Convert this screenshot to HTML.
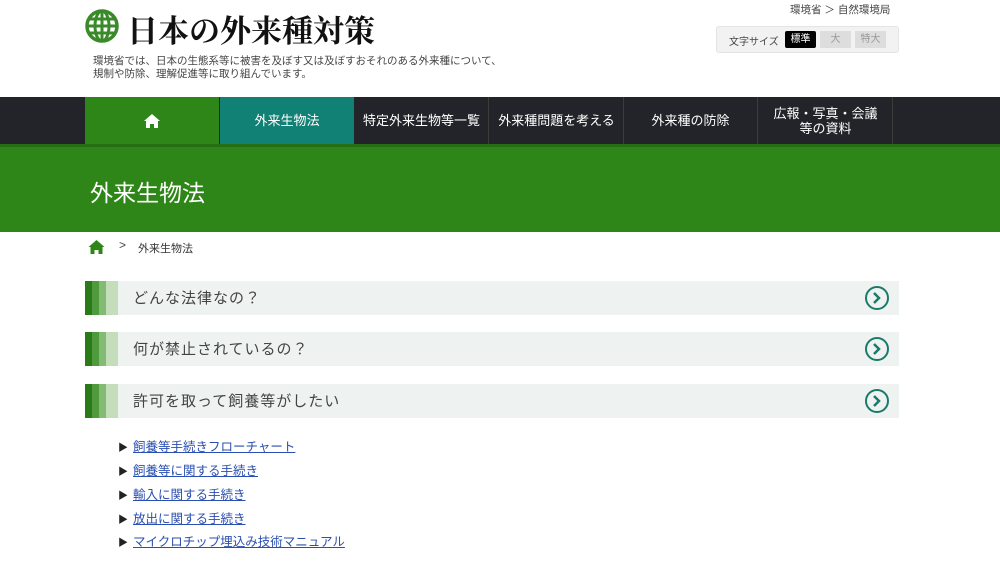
<!DOCTYPE html>
<html><head><meta charset="utf-8"><style>
*{margin:0;padding:0;box-sizing:border-box}
body{width:1000px;height:564px;overflow:hidden;background:#fff;font-family:"Liberation Sans","Noto Sans CJK JP",sans-serif;color:#333;position:relative}
.abs{position:absolute}
.nav{top:97px;left:0;width:1000px;height:47px;background:#22242a}
.cell{position:absolute;top:0;height:47px;width:134px;color:#fff;font-size:13px;display:flex;align-items:center;justify-content:center;text-align:center;line-height:15px;border-right:1px solid #3a3d3a}
.band{top:144px;left:0;width:1000px;height:88px;background:#2f8618;border-top:3px solid #256e12}
.acc{position:absolute;left:85px;width:814px;height:34px;background:#eef3f1}
.acc .s{position:absolute;top:0;height:34px}
.acc .t{position:absolute;left:48px;top:1px;line-height:34px;font-size:15px;color:#444;letter-spacing:1px}
.acc .c{position:absolute;right:10px;top:5px;width:24px;height:24px;border:2.5px solid #1a7a6a;border-radius:50%}
.lk{position:absolute;left:118px;font-size:12.5px;color:#2a4fb0}
.lk span{text-decoration:underline;margin-left:5px}
.lk b{font-size:10px;color:#222;font-weight:normal}
</style></head><body>
<svg class="abs" style="left:85px;top:9px" width="34" height="34" viewBox="0 0 34 34"><circle cx="17" cy="17" r="15" fill="none" stroke="#3a8a2a" stroke-width="3.5"/><g stroke="#3a8a2a" stroke-width="3"><line x1="17" y1="2" x2="17" y2="32"/><line x1="2" y1="17" x2="32" y2="17"/><line x1="4" y1="10" x2="30" y2="10"/><line x1="4" y1="24" x2="30" y2="24"/><ellipse cx="17" cy="17" rx="7" ry="15" fill="none"/></g></svg>
<div class="abs" style="left:127px;top:6px;font-family:'Liberation Serif','Noto Serif CJK SC',serif;font-size:31px;font-weight:bold;color:#111;letter-spacing:0px">日本の外来種対策</div>
<div class="abs" style="left:93px;top:55px;font-size:10.5px;line-height:13px;color:#444">環境省では、日本の生態系等に被害を及ぼす又は及ぼすおそれのある外来種について、<br>規制や防除、理解促進等に取り組んでいます。</div>
<div class="abs" style="left:790px;top:2px;font-size:10.5px;color:#444">環境省 ＞ 自然環境局</div>
<div class="abs" style="left:716px;top:26px;width:183px;height:27px;background:#f2f2f2;border:1px solid #e4e4e4;border-radius:3px"></div>
<div class="abs" style="left:729px;top:33px;font-size:10px;color:#444">文字サイズ</div>
<div class="abs" style="left:785px;top:31px;width:31px;height:17px;background:#000;color:#fff;font-size:10px;text-align:center;line-height:17px;border-radius:2px">標準</div>
<div class="abs" style="left:820px;top:31px;width:31px;height:17px;background:#ddd;color:#999;font-size:10px;text-align:center;line-height:17px">大</div>
<div class="abs" style="left:855px;top:31px;width:31px;height:17px;background:#ddd;color:#999;font-size:10px;text-align:center;line-height:17px">特大</div>
<div class="abs nav">
<div class="cell" style="left:85px;background:#2f8618;border:none"><svg width="16" height="14" viewBox="0 0 16 14"><path d="M8 0L0 7h2v7h4v-4h4v4h4V7h2z" fill="#fff"/></svg></div>
<div class="cell" style="left:220px;background:#128175;border:none">外来生物法</div>
<div class="cell" style="left:355px">特定外来生物等一覧</div>
<div class="cell" style="left:490px">外来種問題を考える</div>
<div class="cell" style="left:624px">外来種の防除</div>
<div class="cell" style="left:759px">広報・写真・会議<br>等の資料</div>
</div>
<div class="abs band"></div>
<div class="abs" style="left:90px;top:174px;font-size:23px;color:#fff">外来生物法</div>
<svg class="abs" style="left:88px;top:240px" width="17" height="14" viewBox="0 0 16 14"><path d="M8 0L0 7h2v7h4v-4h4v4h4V7h2z" fill="#2f8618"/></svg>
<div class="abs" style="left:119px;top:238px;font-size:12px;color:#444">&gt;</div>
<div class="abs" style="left:138px;top:240px;font-size:11px;color:#333">外来生物法</div>
<div class="acc" style="top:281px"><div class="s" style="left:0;width:7px;background:#2b7a18"></div><div class="s" style="left:7px;width:7px;background:#4f9a3c"></div><div class="s" style="left:14px;width:7px;background:#84bb74"></div><div class="s" style="left:21px;width:12px;background:#c4ddbb"></div><div class="t">どんな法律なの？</div><div class="c"></div></div>
<div class="acc" style="top:332px"><div class="s" style="left:0;width:7px;background:#2b7a18"></div><div class="s" style="left:7px;width:7px;background:#4f9a3c"></div><div class="s" style="left:14px;width:7px;background:#84bb74"></div><div class="s" style="left:21px;width:12px;background:#c4ddbb"></div><div class="t">何が禁止されているの？</div><div class="c"></div></div>
<div class="acc" style="top:384px"><div class="s" style="left:0;width:7px;background:#2b7a18"></div><div class="s" style="left:7px;width:7px;background:#4f9a3c"></div><div class="s" style="left:14px;width:7px;background:#84bb74"></div><div class="s" style="left:21px;width:12px;background:#c4ddbb"></div><div class="t">許可を取って飼養等がしたい</div><div class="c"></div></div>
<svg class="abs" style="left:866px;top:288px" width="20" height="20"><path d="M8 5l5 5-5 5" fill="none" stroke="#1a7a6a" stroke-width="2.5"/></svg>
<svg class="abs" style="left:866px;top:339px" width="20" height="20"><path d="M8 5l5 5-5 5" fill="none" stroke="#1a7a6a" stroke-width="2.5"/></svg>
<svg class="abs" style="left:866px;top:391px" width="20" height="20"><path d="M8 5l5 5-5 5" fill="none" stroke="#1a7a6a" stroke-width="2.5"/></svg>
<div class="lk" style="top:436px"><b>▶</b><span>飼養等手続きフローチャート</span></div>
<div class="lk" style="top:460px"><b>▶</b><span>飼養等に関する手続き</span></div>
<div class="lk" style="top:484px"><b>▶</b><span>輸入に関する手続き</span></div>
<div class="lk" style="top:508px"><b>▶</b><span>放出に関する手続き</span></div>
<div class="lk" style="top:531px"><b>▶</b><span>マイクロチップ埋込み技術マニュアル</span></div>
</body></html>
